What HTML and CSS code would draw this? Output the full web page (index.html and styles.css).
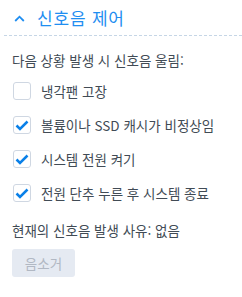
FILE: index.html
```html
<!DOCTYPE html>
<html lang="ko">
<head>
  <meta charset="UTF-8">
  <title>신호음 제어</title>
  <link rel="stylesheet" href="styles.css">
</head>
<body>
  <div class="panel">
    <div class="panel-header">
      <svg class="chevron" width="11" height="7" viewBox="0 0 11 7">
        <path d="M1.2 6 L5.5 1.7 L9.8 6" fill="none" stroke="#1f8ef1" stroke-width="1.8"/>
      </svg>
      <span class="panel-title">신호음 제어</span>
    </div>
    <div class="panel-body">
      <div class="desc">다음 상황 발생 시 신호음 울림:</div>
      <label class="check-row">
        <span class="box"></span>
        <span>냉각팬 고장</span>
      </label>
      <label class="check-row">
        <span class="box checked"><svg width="14" height="11" viewBox="0 0 14 11"><path d="M1.5 5.5 L5 9 L12.5 1.5" fill="none" stroke="#0a80e8" stroke-width="2.5"/></svg></span>
        <span>볼륨이나 SSD 캐시가 비정상임</span>
      </label>
      <label class="check-row">
        <span class="box checked"><svg width="14" height="11" viewBox="0 0 14 11"><path d="M1.5 5.5 L5 9 L12.5 1.5" fill="none" stroke="#0a80e8" stroke-width="2.5"/></svg></span>
        <span>시스템 전원 켜기</span>
      </label>
      <label class="check-row">
        <span class="box checked"><svg width="14" height="11" viewBox="0 0 14 11"><path d="M1.5 5.5 L5 9 L12.5 1.5" fill="none" stroke="#0a80e8" stroke-width="2.5"/></svg></span>
        <span>전원 단추 누른 후 시스템 종료</span>
      </label>
      <div class="status">현재의 신호음 발생 사유: 없음</div>
      <button class="btn" disabled>음소거</button>
    </div>
  </div>
</body>
</html>
```

FILE: styles.css
```css
body {
  margin: 0;
  background: #ffffff;
  font-family: "Noto Sans CJK KR", "Noto Sans", sans-serif;
  color: #414b55;
}
.panel {
  padding: 0 0 0 4px;
}
.panel-header {
  display: flex;
  align-items: center;
  height: 35px;
  padding-left: 10px;
  border-bottom: 1px dashed #c6d6e6;
}
.chevron {
  margin-right: 12px;
  margin-top: 1px;
}
.panel-title {
  font-size: 17px;
  letter-spacing: 0.8px;
  color: #1f8ef1;
}
.panel-body {
  padding: 12px 8px 0 8px;
  font-size: 13.5px;
}
.desc {
  height: 24px;
  line-height: 24px;
  margin-bottom: 10px;
}
.check-row {
  display: flex;
  align-items: center;
  height: 18px;
  margin-bottom: 16px;
}
.box {
  width: 16px;
  height: 16px;
  border: 1px solid #cfd7e2;
  border-radius: 3px;
  margin-left: 1px;
  margin-right: 10px;
  display: flex;
  align-items: center;
  justify-content: center;
  box-sizing: content-box;
}
.status {
  height: 24px;
  line-height: 24px;
  margin-top: 8px;
  margin-bottom: 7px;
}
.btn {
  width: 63px;
  height: 28px;
  border: none;
  border-radius: 3px;
  background: #e5eaf2;
  color: #b1b8c3;
  font-family: inherit;
  font-size: 13.5px;
  padding: 0;
}
```
